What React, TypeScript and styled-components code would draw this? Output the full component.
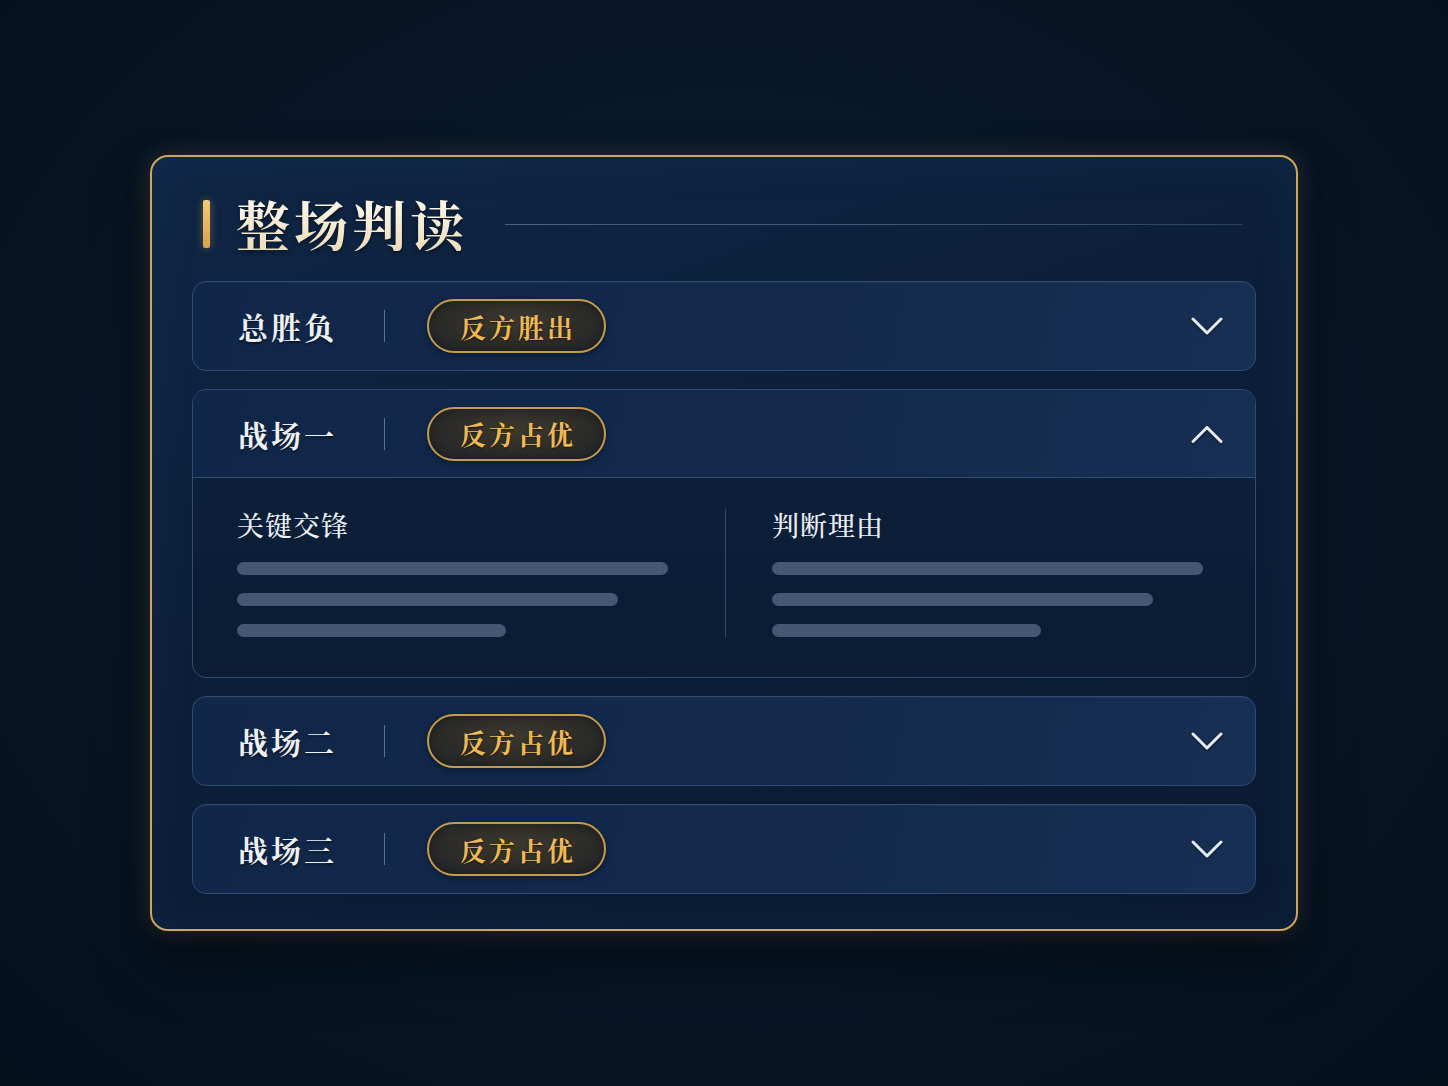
import React from "react";
import styled, { createGlobalStyle } from "styled-components";

const GlobalStyle = createGlobalStyle`
  html, body { margin: 0; padding: 0; }
  body {
    background: #06121f;
    font-family: "Noto Serif CJK SC", "Noto Sans CJK SC", serif;
  }
`;

const Page = styled.div`
  min-height: 100vh;
  display: flex;
  align-items: center;
  justify-content: center;
  background: radial-gradient(ellipse at 50% 45%, #0b1e36 0%, #081729 45%, #05101d 100%);
`;

const Card = styled.section`
  box-sizing: border-box;
  width: 1148px;
  height: 776px;
  padding: 41px 40px 36px;
  border: 2px solid #cfa65c;
  border-radius: 18px;
  background: linear-gradient(160deg, #0f2645 0%, #0c1f39 45%, #0a1a31 100%);
  box-shadow: 0 0 24px rgba(214, 170, 90, 0.18), 0 30px 60px rgba(0, 0, 0, 0.45),
    inset 0 0 40px rgba(30, 60, 100, 0.25);
  display: flex;
  flex-direction: column;
`;

const Header = styled.header`
  display: flex;
  align-items: center;
  height: 52px;
  margin: 0 13px 31px 11px;
`;

const AccentBar = styled.span`
  flex: none;
  width: 7px;
  height: 48px;
  border-radius: 2px;
  background: linear-gradient(180deg, #f4c874 0%, #d9a24c 100%);
  box-shadow: 0 0 8px rgba(240, 190, 100, 0.35);
`;

const Title = styled.h1`
  margin: 0 0 0 26px;
  font-size: 54px;
  line-height: 1;
  font-weight: 700;
  letter-spacing: 4px;
  color: #f4ead4;
  background: linear-gradient(180deg, #fdf8ec 0%, #eddcba 100%);
  -webkit-background-clip: text;
  background-clip: text;
  -webkit-text-fill-color: transparent;
  filter: drop-shadow(0 2px 2px rgba(0, 0, 0, 0.5));
  white-space: nowrap;
`;

const TitleRule = styled.span`
  flex: 1;
  height: 1px;
  margin-left: 37px;
  background: linear-gradient(90deg, #4a6282 0%, #3a5272 70%, #2b4262 100%);
`;

const List = styled.div`
  display: flex;
  flex-direction: column;
  gap: 18px;
`;

const Item = styled.div<{ $open?: boolean }>`
  box-sizing: border-box;
  border: 1px solid #304c70;
  border-radius: 14px;
  background: ${(p) =>
    p.$open
      ? "linear-gradient(180deg, #0d213c 0%, #0b1c34 100%)"
      : "linear-gradient(100deg, #10274a 0%, #132a4c 60%, #172f53 100%)"};
  box-shadow: inset 0 1px 0 rgba(120, 160, 210, 0.08);
  overflow: hidden;
`;

const ItemHead = styled.div<{ $open?: boolean }>`
  box-sizing: border-box;
  height: 88px;
  display: flex;
  align-items: center;
  padding: 0 31px 0 45px;
  border-bottom: ${(p) => (p.$open ? "1px solid #304c70" : "none")};
  background: ${(p) =>
    p.$open ? "linear-gradient(100deg, #10274a 0%, #132a4c 60%, #172f53 100%)" : "transparent"};
`;

const Label = styled.span`
  flex: none;
  width: 146px;
  font-size: 30px;
  font-weight: 700;
  letter-spacing: 3px;
  color: #eef0f2;
  text-shadow: 0 2px 2px rgba(0, 0, 0, 0.5);
`;

const Divider = styled.span`
  flex: none;
  width: 1px;
  height: 32px;
  background: #5a7294;
`;

const Pill = styled.span`
  box-sizing: border-box;
  flex: none;
  margin-left: 42px;
  width: 179px;
  height: 54px;
  border-radius: 27px;
  border: 2px solid #c69a4c;
  background: radial-gradient(ellipse at 50% 40%, #3b382e 0%, #2d2c28 55%, #1f242c 100%);
  box-shadow: 0 2px 6px rgba(0, 0, 0, 0.4), inset 0 0 10px rgba(0, 0, 0, 0.35);
  display: flex;
  align-items: center;
  justify-content: center;
  font-size: 26px;
  font-weight: 700;
  letter-spacing: 3px;
  padding-left: 3px;
  color: #eeb954;
  text-shadow: 0 1px 2px rgba(0, 0, 0, 0.6);
`;

const Chevron = styled.svg`
  margin-left: auto;
  flex: none;
  width: 34px;
  height: 34px;
  filter: drop-shadow(0 1px 1px rgba(0, 0, 0, 0.5));
`;

const Body = styled.div`
  display: flex;
  align-items: stretch;
  padding: 31px 0 40px 44px;
`;

const Column = styled.div`
  width: 431px;
  flex: none;
`;

const ColTitle = styled.h3`
  margin: 0 0 21px;
  font-size: 27px;
  line-height: 32px;
  font-weight: 500;
  letter-spacing: 1px;
  color: #eef0f3;
`;

const Lines = styled.div`
  display: flex;
  flex-direction: column;
  gap: 18px;
`;

const Line = styled.span`
  display: block;
  height: 13px;
  border-radius: 7px;
  background: #455873;
`;

const VSep = styled.span`
  flex: none;
  width: 1px;
  margin: 0 46px 0 57px;
  background: #2f4a6c;
`;

const ChevronIcon = ({ up }: { up?: boolean }) => (
  <Chevron viewBox="0 0 34 34" fill="none">
    <polyline
      points={up ? "3,24.5 17,10.5 31,24.5" : "3,10 17,24 31,10"}
      stroke="#e7ecf3"
      strokeWidth="3"
      strokeLinecap="round"
      strokeLinejoin="round"
    />
  </Chevron>
);

type Row = { label: string; verdict: string; open?: boolean };

const rows: Row[] = [
  { label: "总胜负", verdict: "反方胜出" },
  { label: "战场一", verdict: "反方占优", open: true },
  { label: "战场二", verdict: "反方占优" },
  { label: "战场三", verdict: "反方占优" },
];

const widths = ["100%", "88.5%", "62.5%"];

export default function App() {
  return (
    <>
      <GlobalStyle />
      <Page>
        <Card>
          <Header>
            <AccentBar />
            <Title>整场判读</Title>
            <TitleRule />
          </Header>
          <List>
            {rows.map((r) => (
              <Item key={r.label} $open={r.open}>
                <ItemHead $open={r.open}>
                  <Label>{r.label}</Label>
                  <Divider />
                  <Pill>{r.verdict}</Pill>
                  <ChevronIcon up={r.open} />
                </ItemHead>
                {r.open && (
                  <Body>
                    <Column>
                      <ColTitle>关键交锋</ColTitle>
                      <Lines>
                        {widths.map((w) => (
                          <Line key={w} style={{ width: w }} />
                        ))}
                      </Lines>
                    </Column>
                    <VSep />
                    <Column>
                      <ColTitle>判断理由</ColTitle>
                      <Lines>
                        {widths.map((w) => (
                          <Line key={w} style={{ width: w }} />
                        ))}
                      </Lines>
                    </Column>
                  </Body>
                )}
              </Item>
            ))}
          </List>
        </Card>
      </Page>
    </>
  );
}
